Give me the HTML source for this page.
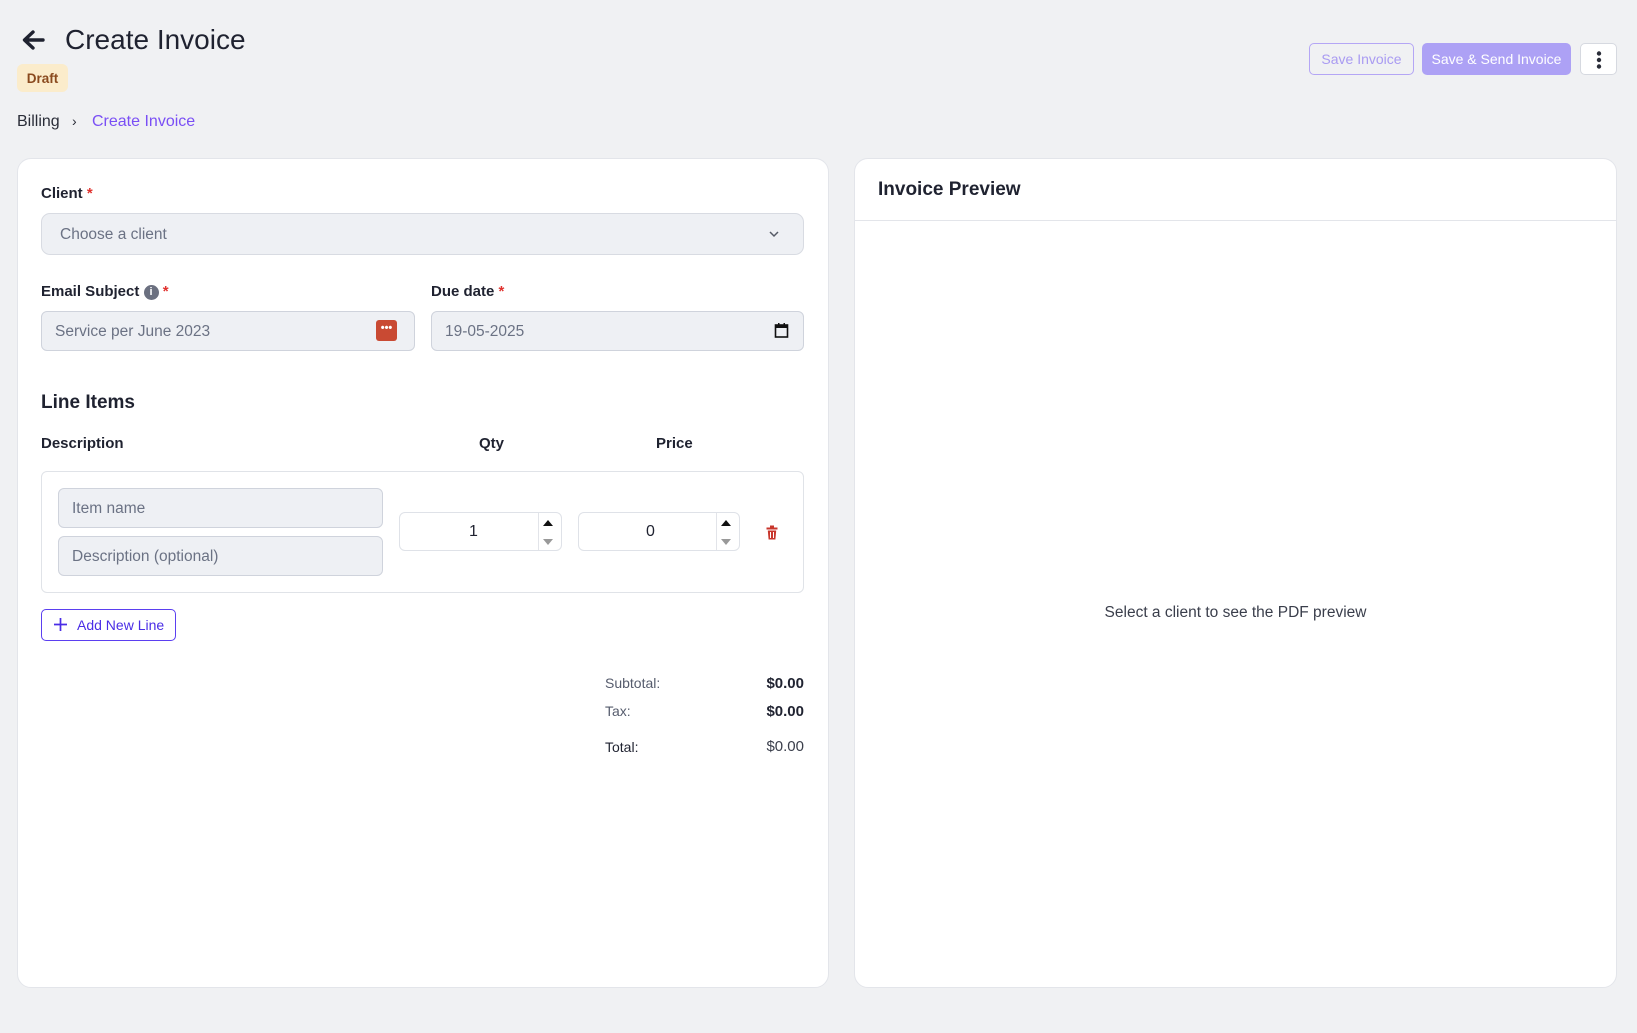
<!DOCTYPE html>
<html><head><meta charset="utf-8"><style>
*{box-sizing:border-box;margin:0;padding:0}
body{width:1637px;height:1033px;background:#f0f1f3;font-family:"Liberation Sans",sans-serif;color:#1f2230;position:relative;overflow:hidden}
.a{position:absolute}
.card{position:absolute;background:#fff;border:1px solid #e3e5ea;border-radius:14px}
.lbl{position:absolute;font-size:15px;font-weight:bold;color:#1f2230}
.req{color:#e0322e}
.inp{position:absolute;background:#eef0f4;border:1px solid #cfd3dc;border-radius:6px;color:#6b7284;font-size:15.5px;padding-left:13px;padding-top:2px;display:flex;align-items:center}
.num{position:absolute;background:#fff;border:1px solid #dfe2e8;border-radius:6px;font-size:16px;display:flex;align-items:center}
</style></head><body>
<svg class="a" style="left:21px;top:29px" width="24" height="22" viewBox="0 0 24 22"><path d="M22 11H4M12 3L3.5 11 12 19" stroke="#1f2230" stroke-width="3.4" fill="none" stroke-linecap="round" stroke-linejoin="round"/></svg>
<div class="a" style="left:65px;top:24px;font-size:28px;color:#1f2230">Create Invoice</div>
<div class="a" style="left:17px;top:64px;width:51px;height:28px;background:#fbeccb;border-radius:6px;color:#8a4a1e;font-size:13.5px;font-weight:bold;display:flex;align-items:center;justify-content:center">Draft</div>
<div class="a" style="left:17px;top:113px;font-size:16px;color:#2a2d38">Billing</div>
<div class="a" style="left:72px;top:113px;font-size:14px;color:#2a2d38">›</div>
<div class="a" style="left:92px;top:113px;font-size:16px;color:#7a4ff5">Create Invoice</div>
<div class="a" style="left:1309px;top:43px;width:105px;height:32px;border:1px solid #b4a6f5;border-radius:5px;color:#a99bf2;font-size:14px;display:flex;align-items:center;justify-content:center">Save Invoice</div>
<div class="a" style="left:1422px;top:43px;width:149px;height:32px;background:#ada1f5;border-radius:5px;color:#fff;font-size:14px;display:flex;align-items:center;justify-content:center">Save &amp; Send Invoice</div>
<div class="a" style="left:1580px;top:43px;width:37px;height:32px;background:#fff;border:1px solid #d6d9e0;border-radius:5px"><svg width="37" height="32"><circle cx="18" cy="9.5" r="2.2" fill="#2a2d38"/><circle cx="18" cy="16" r="2.2" fill="#2a2d38"/><circle cx="18" cy="22.5" r="2.2" fill="#2a2d38"/></svg></div>

<div class="card" style="left:17px;top:158px;width:812px;height:830px"></div>
<div class="lbl" style="left:41px;top:185px">Client <span class="req">*</span></div>
<div class="inp" style="left:41px;top:213px;width:763px;height:42px;padding-left:18px;border-radius:9px;border-color:#d8dbe2">Choose a client</div>
<svg class="a" style="left:768px;top:229px" width="12" height="10"><path d="M2 3l4 4 4-4" stroke="#555a66" stroke-width="1.5" fill="none"/></svg>
<div class="lbl" style="left:41px;top:283px">Email Subject <span style="display:inline-block;width:15px;height:15px;border-radius:50%;background:#6b7080;color:#fff;font-size:11px;text-align:center;line-height:15px;vertical-align:1px">i</span> <span class="req">*</span></div>
<div class="inp" style="left:41px;top:311px;width:374px;height:40px">Service per June 2023</div>
<div class="a" style="left:376px;top:320px;width:21px;height:21px;background:#c94a33;border-radius:3px;color:#fff;font-size:11px;font-weight:bold;text-align:center;line-height:17px">•••</div>
<div class="lbl" style="left:431px;top:283px">Due date <span class="req">*</span></div>
<div class="inp" style="left:431px;top:311px;width:373px;height:40px">19-05-2025</div>
<svg class="a" style="left:774px;top:322px" width="15" height="17"><rect x="1.5" y="3" width="12" height="12" fill="none" stroke="#111" stroke-width="1.6"/><rect x="1.5" y="3" width="12" height="3" fill="#111"/><rect x="4" y="1" width="1.5" height="3" fill="#111"/><rect x="9.5" y="1" width="1.5" height="3" fill="#111"/></svg>
<div class="a" style="left:41px;top:392px;font-size:19px;font-weight:bold">Line Items</div>
<div class="lbl" style="left:41px;top:435px">Description</div>
<div class="lbl" style="left:479px;top:435px">Qty</div>
<div class="lbl" style="left:656px;top:435px">Price</div>
<div class="a" style="left:41px;top:471px;width:763px;height:122px;border:1px solid #e0e3e8;border-radius:6px"></div>
<div class="inp" style="left:58px;top:488px;width:325px;height:40px">Item name</div>
<div class="inp" style="left:58px;top:536px;width:325px;height:40px">Description (optional)</div>
<div class="num" style="left:399px;top:512px;width:163px;height:39px"><span style="position:absolute;left:69px;top:10px">1</span><div style="position:absolute;left:138px;top:0;width:1px;height:37px;background:#e2e4e9"></div><svg style="position:absolute;left:142px;top:6px" width="12" height="28"><path d="M1 7h10L6 1z" fill="#111"/><path d="M1 20h10l-5 6z" fill="#999"/></svg></div>
<div class="num" style="left:578px;top:512px;width:162px;height:39px"><span style="position:absolute;left:67px;top:10px">0</span><div style="position:absolute;left:137px;top:0;width:1px;height:37px;background:#e2e4e9"></div><svg style="position:absolute;left:141px;top:6px" width="12" height="28"><path d="M1 7h10L6 1z" fill="#111"/><path d="M1 20h10l-5 6z" fill="#999"/></svg></div>
<svg class="a" style="left:766px;top:525px" width="12" height="15"><rect x="0.5" y="2.5" width="11" height="2" fill="#c8362c"/><rect x="4" y="0.5" width="4" height="2" fill="#c8362c"/><path d="M1.8 5.5h8.4l-.8 9H2.6z" fill="#c8362c"/><path d="M4.5 7v6M7.5 7v6" stroke="#fff" stroke-width="1"/></svg>
<div class="a" style="left:41px;top:609px;width:135px;height:32px;border:1px solid #5b3ff0;border-radius:5px;color:#4a2de6;font-size:14px;display:flex;align-items:center;padding-left:35px">Add New Line</div>
<svg class="a" style="left:53px;top:617px" width="15" height="15"><path d="M7.5 1v13M1 7.5h13" stroke="#4a2de6" stroke-width="1.7"/></svg>
<div class="a" style="left:605px;top:675px;font-size:14px;color:#565c6d">Subtotal:</div>
<div class="a" style="left:724px;top:675px;width:80px;text-align:right;font-size:15px;font-weight:bold">$0.00</div>
<div class="a" style="left:605px;top:703px;font-size:14px;color:#565c6d">Tax:</div>
<div class="a" style="left:724px;top:703px;width:80px;text-align:right;font-size:15px;font-weight:bold">$0.00</div>
<div class="a" style="left:605px;top:739px;font-size:14px;color:#1f2230">Total:</div>
<div class="a" style="left:724px;top:738px;width:80px;text-align:right;font-size:15px;color:#3a3e4b">$0.00</div>

<div class="card" style="left:854px;top:158px;width:763px;height:830px"></div>
<div class="a" style="left:878px;top:179px;font-size:19px;font-weight:bold">Invoice Preview</div>
<div class="a" style="left:855px;top:220px;width:761px;height:1px;background:#e3e5ea"></div>
<div class="a" style="left:855px;top:604px;width:761px;text-align:center;font-size:15.5px;color:#3a3e4b">Select a client to see the PDF preview</div>
</body></html>
